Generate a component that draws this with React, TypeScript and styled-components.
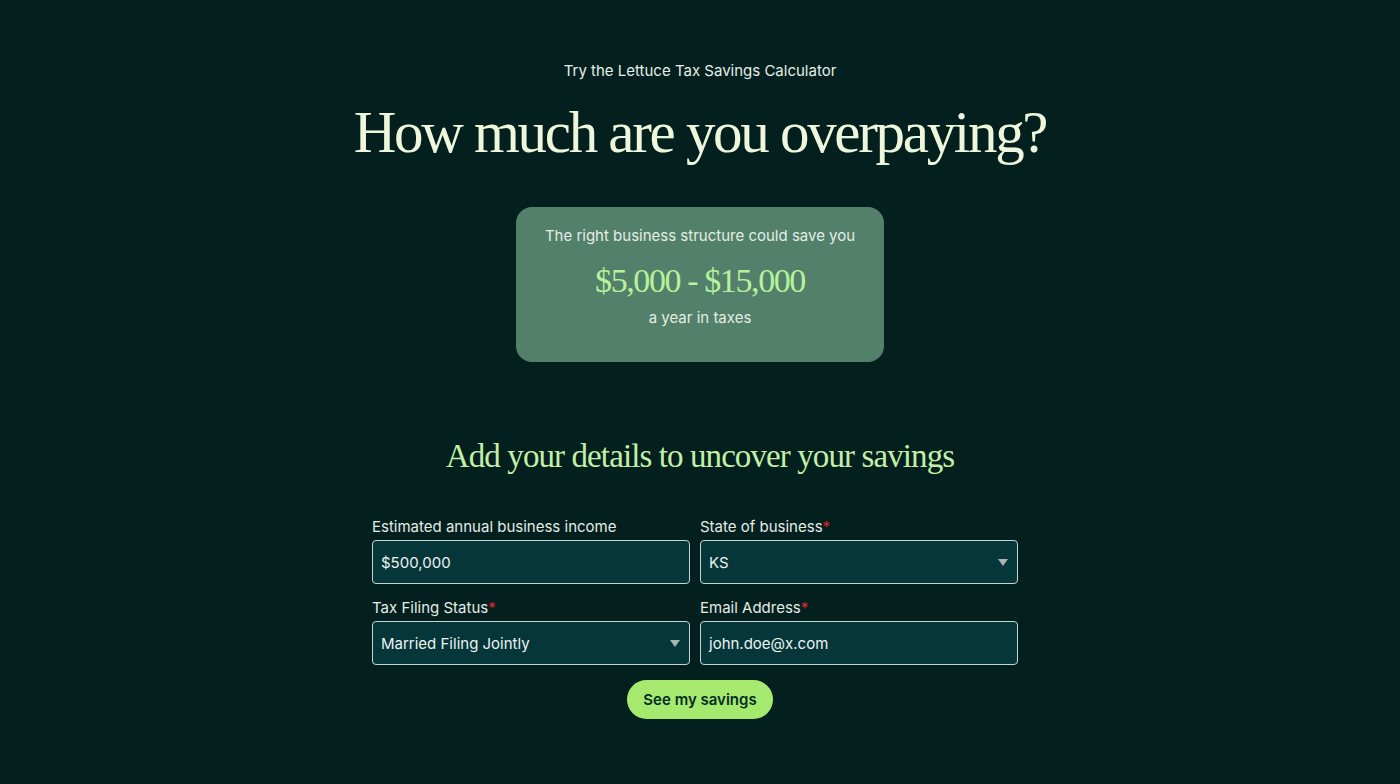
import React from "react";
import styled, { createGlobalStyle } from "styled-components";

const Global = createGlobalStyle`
  html, body { margin: 0; padding: 0; background: #03201f; }
  body { font-family: Inter, "Noto Sans", sans-serif; }
  * { box-sizing: border-box; }
`;

const Page = styled.main`
  min-height: 784px;
  background: #03201f;
  display: flex;
  flex-direction: column;
  align-items: center;
  padding-top: 61px;
`;

const Eyebrow = styled.p`
  margin: 0;
  color: #e6efe6;
  font-size: 15px;
  line-height: 20px;
`;

const Title = styled.h1`
  margin: 15px 0 0;
  font-family: "Liberation Serif", "DejaVu Serif", serif;
  font-weight: 400;
  font-size: 59px;
  line-height: 72px;
  letter-spacing: -2.3px;
  color: #eef7dc;
`;

const ResultCard = styled.section`
  margin-top: 39px;
  width: 368px;
  height: 155px;
  border-radius: 16px;
  background: #52806a;
  display: flex;
  flex-direction: column;
  align-items: center;
  padding-top: 19px;
`;

const CardText = styled.p`
  margin: 0;
  color: #e4eee4;
  font-size: 15px;
  line-height: 20px;
`;

const Amount = styled.p`
  margin: 15px 0 7px;
  font-family: "Liberation Serif", "DejaVu Serif", serif;
  font-size: 34px;
  line-height: 40px;
  letter-spacing: -1.4px;
  color: #b8f19c;
`;

const SubTitle = styled.h2`
  margin: 72px 0 0;
  font-family: "Liberation Serif", "DejaVu Serif", serif;
  font-weight: 400;
  font-size: 33px;
  line-height: 44px;
  letter-spacing: -0.9px;
  color: #c3efa6;
`;

const Form = styled.form`
  margin-top: 40px;
  display: flex;
  flex-direction: column;
  align-items: center;
  gap: 15px;
`;

const Grid = styled.div`
  display: grid;
  grid-template-columns: 318px 318px;
  column-gap: 10px;
  row-gap: 15px;
  margin-right: 10px;
`;

const Field = styled.label`
  display: flex;
  flex-direction: column;
  gap: 4px;
`;

const LabelText = styled.span`
  color: #e4ece6;
  font-size: 15px;
  line-height: 18px;
`;

const Req = styled.span`
  color: #e0242c;
`;

const Box = styled.div`
  position: relative;
  height: 44px;
  border: 1px solid #c4d6cf;
  border-radius: 4px;
  background: #04363a;
  display: flex;
  align-items: center;
  padding: 0 8px;
  color: #eef3ef;
  font-size: 15px;
`;

const Caret = styled.span`
  position: absolute;
  right: 9px;
  top: 18px;
  width: 0;
  height: 0;
  border-left: 5.5px solid transparent;
  border-right: 5.5px solid transparent;
  border-top: 7px solid #a9b5b3;
`;

const Button = styled.button`
  height: 39px;
  padding: 0 16px;
  border: none;
  border-radius: 20px;
  background: #a5ea6e;
  color: #082b24;
  font-family: Inter, "Noto Sans", sans-serif;
  font-size: 15px;
  font-weight: 600;
  cursor: pointer;
`;

function Input({ label, value, required, select }: { label: string; value: string; required?: boolean; select?: boolean }) {
  return (
    <Field>
      <LabelText>
        {label}
        {required && <Req>*</Req>}
      </LabelText>
      <Box>
        {value}
        {select && <Caret />}
      </Box>
    </Field>
  );
}

export default function App() {
  return (
    <>
      <Global />
      <Page>
        <Eyebrow>Try the Lettuce Tax Savings Calculator</Eyebrow>
        <Title>How much are you overpaying?</Title>
        <ResultCard>
          <CardText>The right business structure could save you</CardText>
          <Amount>$5,000 - $15,000</Amount>
          <CardText>a year in taxes</CardText>
        </ResultCard>
        <SubTitle>Add your details to uncover your savings</SubTitle>
        <Form onSubmit={(e) => e.preventDefault()}>
          <Grid>
            <Input label="Estimated annual business income" value="$500,000" />
            <Input label="State of business" value="KS" required select />
            <Input label="Tax Filing Status" value="Married Filing Jointly" required select />
            <Input label="Email Address" value="john.doe@x.com" required />
          </Grid>
          <Button type="submit">See my savings</Button>
        </Form>
      </Page>
    </>
  );
}
